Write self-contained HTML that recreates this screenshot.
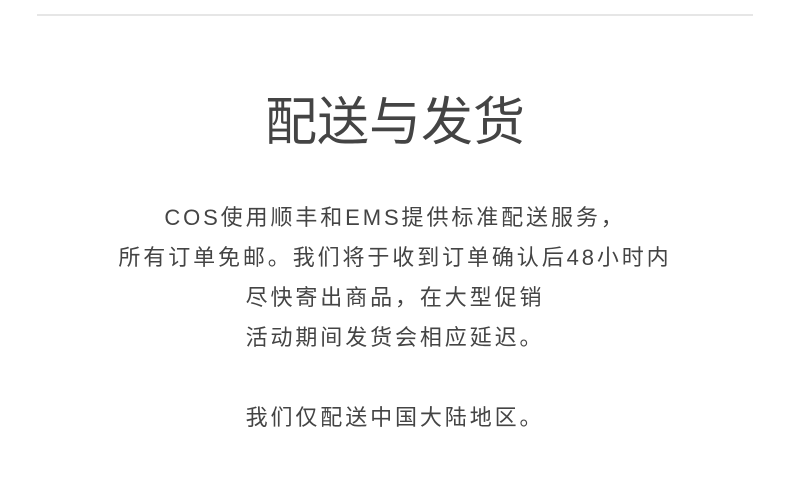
<!DOCTYPE html>
<html><head><meta charset="utf-8"><style>
html,body{margin:0;padding:0;background:#fff;width:790px;height:482px;overflow:hidden}
.line{position:absolute;left:37px;top:14px;width:716px;height:2px;background:#e6e6e6}
h1{position:absolute;top:90px;left:0;width:790px;margin:0;text-align:center;font:normal 52px/66px "Liberation Sans","Noto Sans CJK SC",sans-serif;color:#444;letter-spacing:0}
.b{position:absolute;top:198px;left:0;width:790px;text-align:center;font:normal 22px/40px "Liberation Sans","Noto Sans CJK SC",sans-serif;color:#444;letter-spacing:2.9px}
.b p{margin:0}
</style></head><body>
<div class="line"></div>
<h1>配送与发货</h1>
<div class="b">
<p>COS使用顺丰和EMS提供标准配送服务，</p>
<p>所有订单免邮。我们将于收到订单确认后48小时内</p>
<p>尽快寄出商品，在大型促销</p>
<p>活动期间发货会相应延迟。</p>
<p>&nbsp;</p>
<p>我们仅配送中国大陆地区。</p>
</div>
</body></html>
